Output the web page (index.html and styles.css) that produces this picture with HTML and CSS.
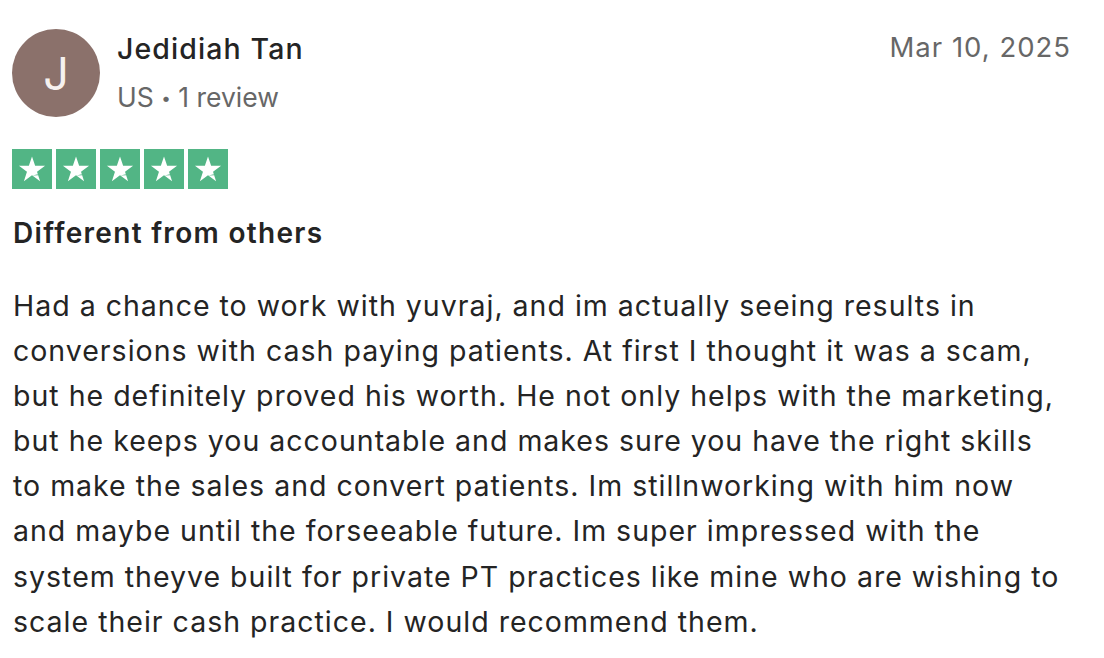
FILE: index.html
```html
<!DOCTYPE html>
<html lang="en">
<head>
<meta charset="utf-8">
<title>Review</title>
<link rel="stylesheet" href="styles.css">
</head>
<body>
<article class="review">
  <header class="review-head">
    <div class="consumer">
      <div class="avatar">J</div>
      <div class="consumer-info">
        <div class="name">Jedidiah Tan</div>
        <div class="meta">US <span class="dot">•</span> 1 review</div>
      </div>
    </div>
    <time class="date">Mar 10, 2025</time>
  </header>
  <div class="stars">
    <span class="star"><svg viewBox="0 0 24 24"><path d="M12 2.6l2.35 7.05h7.45l-6.03 4.36 2.3 7.09L12 16.7l-6.07 4.4 2.3-7.09L2.2 9.65h7.45z" fill="#fff"/><path d="M12.4 16.95l3.9-1.05 0.25 0.75z" fill="#52b585"/></svg></span>
    <span class="star"><svg viewBox="0 0 24 24"><path d="M12 2.6l2.35 7.05h7.45l-6.03 4.36 2.3 7.09L12 16.7l-6.07 4.4 2.3-7.09L2.2 9.65h7.45z" fill="#fff"/><path d="M12.4 16.95l3.9-1.05 0.25 0.75z" fill="#52b585"/></svg></span>
    <span class="star"><svg viewBox="0 0 24 24"><path d="M12 2.6l2.35 7.05h7.45l-6.03 4.36 2.3 7.09L12 16.7l-6.07 4.4 2.3-7.09L2.2 9.65h7.45z" fill="#fff"/><path d="M12.4 16.95l3.9-1.05 0.25 0.75z" fill="#52b585"/></svg></span>
    <span class="star"><svg viewBox="0 0 24 24"><path d="M12 2.6l2.35 7.05h7.45l-6.03 4.36 2.3 7.09L12 16.7l-6.07 4.4 2.3-7.09L2.2 9.65h7.45z" fill="#fff"/><path d="M12.4 16.95l3.9-1.05 0.25 0.75z" fill="#52b585"/></svg></span>
    <span class="star"><svg viewBox="0 0 24 24"><path d="M12 2.6l2.35 7.05h7.45l-6.03 4.36 2.3 7.09L12 16.7l-6.07 4.4 2.3-7.09L2.2 9.65h7.45z" fill="#fff"/><path d="M12.4 16.95l3.9-1.05 0.25 0.75z" fill="#52b585"/></svg></span>
  </div>
  <h2 class="title">Different from others</h2>
  <p class="body">Had a chance to work with yuvraj, and im actually seeing results in conversions with cash paying patients. At first I thought it was a scam, but he definitely proved his worth. He not only helps with the marketing, but he keeps you accountable and makes sure you have the right skills to make the sales and convert patients. Im stillnworking with him now and maybe until the forseeable future. Im super impressed with the system theyve built for private PT practices like mine who are wishing to scale their cash practice. I would recommend them.</p>
</article>
</body>
</html>
```
FILE: styles.css
```css
html, body {
  margin: 0;
  padding: 0;
  background: #fff;
}
body {
  font-family: Inter, "Liberation Sans", sans-serif;
  color: #242424;
}
.review {
  padding: 29px 20px 0 12px;
}
.review-head {
  display: flex;
  justify-content: space-between;
  align-items: flex-start;
}
.consumer {
  display: flex;
  align-items: center;
  gap: 17px;
}
.avatar {
  width: 88px;
  height: 88px;
  border-radius: 50%;
  background: #8b716b;
  color: #f6f1ef;
  display: flex;
  align-items: center;
  justify-content: center;
  font-size: 45px;
  font-weight: 400;
  line-height: 1;
}
.consumer-info {
  display: flex;
  flex-direction: column;
  gap: 14px;
  margin-top: -2px;
}
.name {
  font-size: 28.5px;
  font-weight: 500;
  letter-spacing: 1.1px;
  line-height: 36px;
  color: #242424;
}
.meta {
  font-size: 26.5px;
  line-height: 32px;
  color: #676767;
}
.dot {
  font-size: 17px;
  vertical-align: 3px;
}
.date {
  font-size: 27.5px;
  letter-spacing: 1px;
  line-height: 36px;
  color: #676767;
  margin-top: 0;
  margin-right: 13px;
}
.stars {
  display: flex;
  gap: 4px;
  margin-top: 32px;
}
.star {
  width: 40px;
  height: 40px;
  background: #52b585;
  display: flex;
  align-items: center;
  justify-content: center;
}
.star svg {
  width: 32px;
  height: 32px;
}
.title {
  margin: 24px 0 0 1px;
  font-size: 28px;
  font-weight: 600;
  letter-spacing: 1.3px;
  line-height: 40px;
  color: #242424;
}
.body {
  margin: 30px 19px 0 1px;
  font-size: 28.5px;
  letter-spacing: 1px;
  line-height: 45.1px;
  color: #242424;
}
```
